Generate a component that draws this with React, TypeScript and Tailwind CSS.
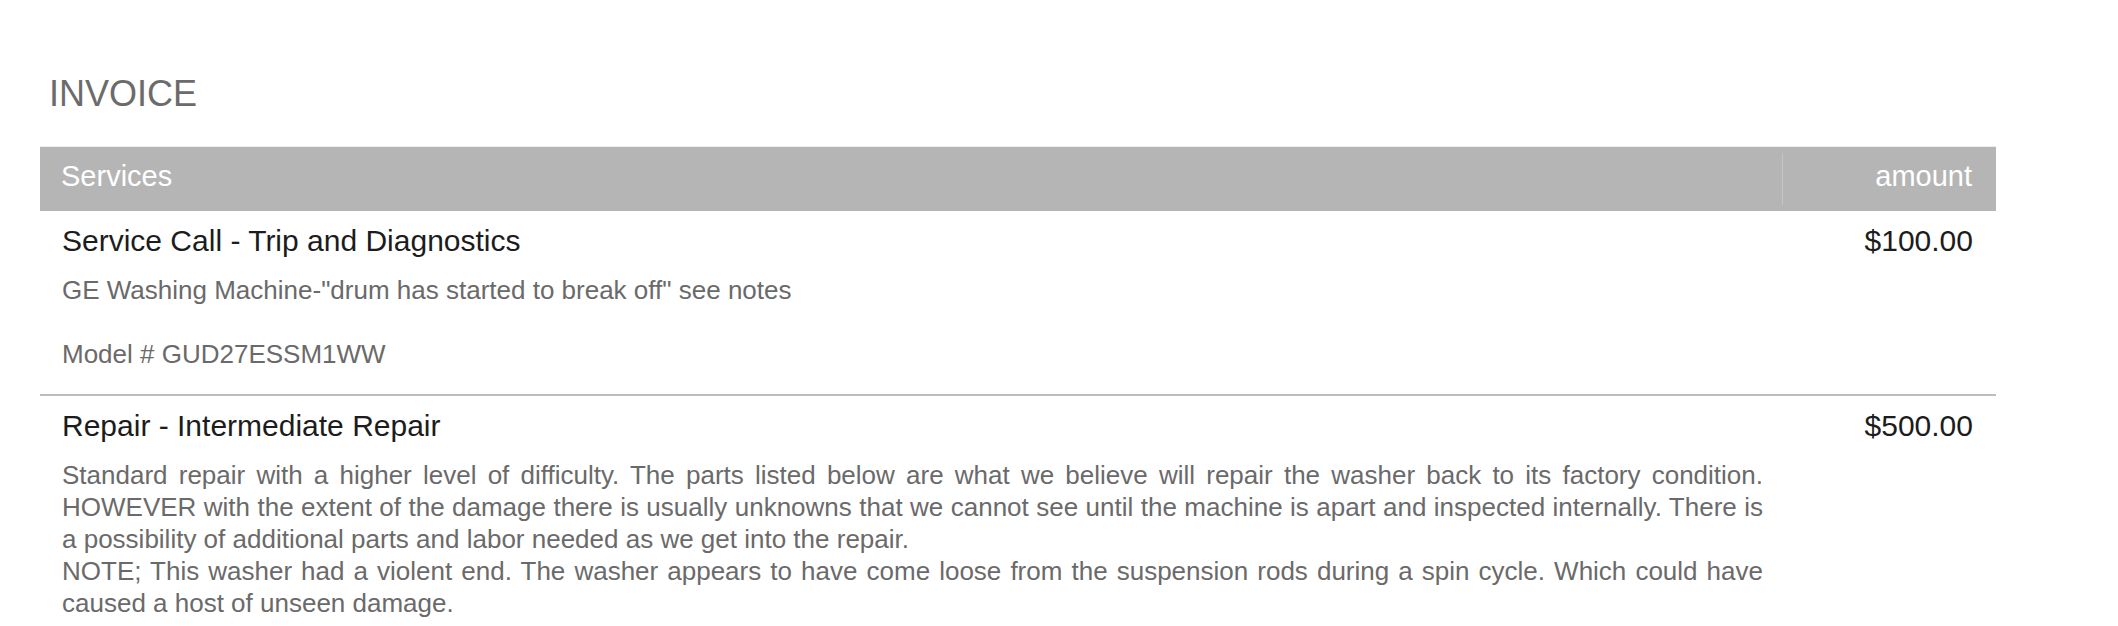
const items = [
    {
        title: "Service Call - Trip and Diagnostics",
        amount: "$100.00",
        lines: [
            'GE Washing Machine-"drum has started to break off" see notes',
            "Model # GUD27ESSM1WW",
        ],
    },
];

const App = () => {
    return (
        <div className="min-h-screen bg-white pt-[73px] font-['Liberation_Sans',Arial,sans-serif]">
            <div className="ml-[40px] w-[1956px]">
                <h1 className="pl-[9px] text-[36px] leading-[42px] text-[#6b6b6b]">INVOICE</h1>

                <div className="mt-[31px] border-t border-[#ededed]">
                    {/* table head */}
                    <div className="flex h-[64px] bg-[#b5b5b5] text-[29px] text-white">
                        <div className="flex-1 pl-[21px] pt-[11px] leading-[36px]">Services</div>
                        <div className="w-[214px] py-[6px]">
                            <div className="h-full border-l border-[#c6c6c6] pr-[24px] pt-[5px] text-right leading-[36px]">
                                amount
                            </div>
                        </div>
                    </div>

                    {items.map((item, index) => (
                        <div key={`item-${index}`} className="flex border-b-2 border-[#bdbdbd]">
                            <div className="flex-1 pl-[22px] pr-[19px] pt-[12px] pb-[24px]">
                                <div className="text-[30px] leading-[36px] text-[#1c1c1c]">{item.title}</div>
                                <p className="mt-[15px] text-[26px] leading-[32px] text-[#6a6a6a]">{item.lines[0]}</p>
                                <p className="mt-[32px] text-[26px] leading-[32px] text-[#6a6a6a]">{item.lines[1]}</p>
                            </div>
                            <div className="w-[214px] pr-[23px] pt-[12px] text-right text-[30px] leading-[36px] text-[#1c1c1c]">
                                {item.amount}
                            </div>
                        </div>
                    ))}

                    <div className="flex">
                        <div className="flex-1 pl-[22px] pr-[19px] pt-[12px] pb-[20px]">
                            <div className="text-[30px] leading-[36px] text-[#1c1c1c]">Repair - Intermediate Repair</div>
                            <p className="mt-[15px] text-justify text-[26px] leading-[32px] text-[#6a6a6a]">
                                Standard repair with a higher level of difficulty. The parts listed below are what we
                                believe will repair the washer back to its factory condition. HOWEVER with the extent
                                of the damage there is usually unknowns that we cannot see until the machine is apart
                                and inspected internally. There is a possibility of additional parts and labor needed
                                as we get into the repair.
                                <br />
                                NOTE; This washer had a violent end. The washer appears to have come loose from the
                                suspension rods during a spin cycle. Which could have caused a host of unseen damage.
                            </p>
                        </div>
                        <div className="w-[214px] pr-[23px] pt-[12px] text-right text-[30px] leading-[36px] text-[#1c1c1c]">
                            $500.00
                        </div>
                    </div>
                </div>
            </div>
        </div>
    );
};

export default App;
